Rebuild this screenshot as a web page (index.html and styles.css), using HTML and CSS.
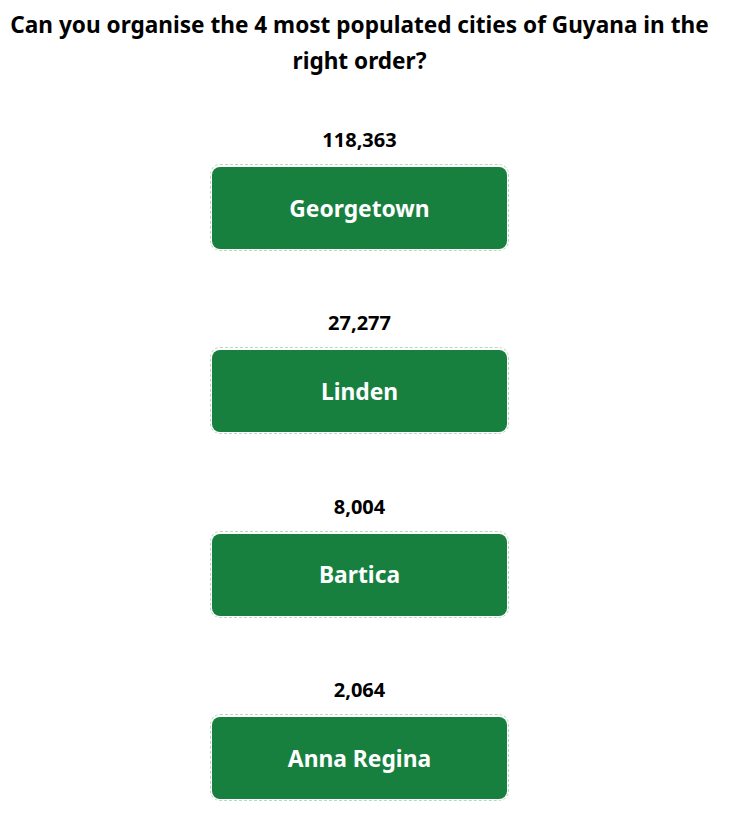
FILE: index.html
```html
<!DOCTYPE html>
<html>
<head>
<meta charset="utf-8">
<link rel="stylesheet" href="styles.css">
</head>
<body>
<main class="quiz">
  <h1 class="title">Can you organise the 4 most populated cities of Guyana in the right order?</h1>
  <ol class="list">
    <li class="item">
      <div class="count">118,363</div>
      <div class="slot"><div class="city">Georgetown</div></div>
    </li>
    <li class="item">
      <div class="count">27,277</div>
      <div class="slot"><div class="city">Linden</div></div>
    </li>
    <li class="item">
      <div class="count">8,004</div>
      <div class="slot"><div class="city">Bartica</div></div>
    </li>
    <li class="item">
      <div class="count">2,064</div>
      <div class="slot"><div class="city">Anna Regina</div></div>
    </li>
  </ol>
</main>
</body>
</html>
```

FILE: styles.css
```css
html, body {
  margin: 0;
  padding: 0;
  background: #ffffff;
}

body {
  font-family: "Noto Sans", "Open Sans", sans-serif;
  color: #000;
}

.quiz {
  width: 719px;
}

.title {
  margin: 7px 0 0;
  font-size: 22.6px;
  line-height: 36px;
  font-weight: 700;
  text-align: center;
}

.list {
  list-style: none;
  margin: 49px 0 0;
  padding: 0;
  display: flex;
  flex-direction: column;
  gap: 60.4px;
}

.item {
  display: flex;
  flex-direction: column;
  align-items: center;
}

.count {
  font-size: 20px;
  line-height: 24px;
  font-weight: 700;
}

.slot {
  margin-top: 12px;
  width: 295px;
  height: 82px;
  padding: 2px 1px 1px;
  border: 1px dashed #b9d8c2;
  border-radius: 10px;
}

.city {
  height: 100%;
  background: #17803f;
  border-radius: 8px;
  color: #fff;
  font-size: 22.8px;
  font-weight: 700;
  display: flex;
  align-items: center;
  justify-content: center;
}
```
